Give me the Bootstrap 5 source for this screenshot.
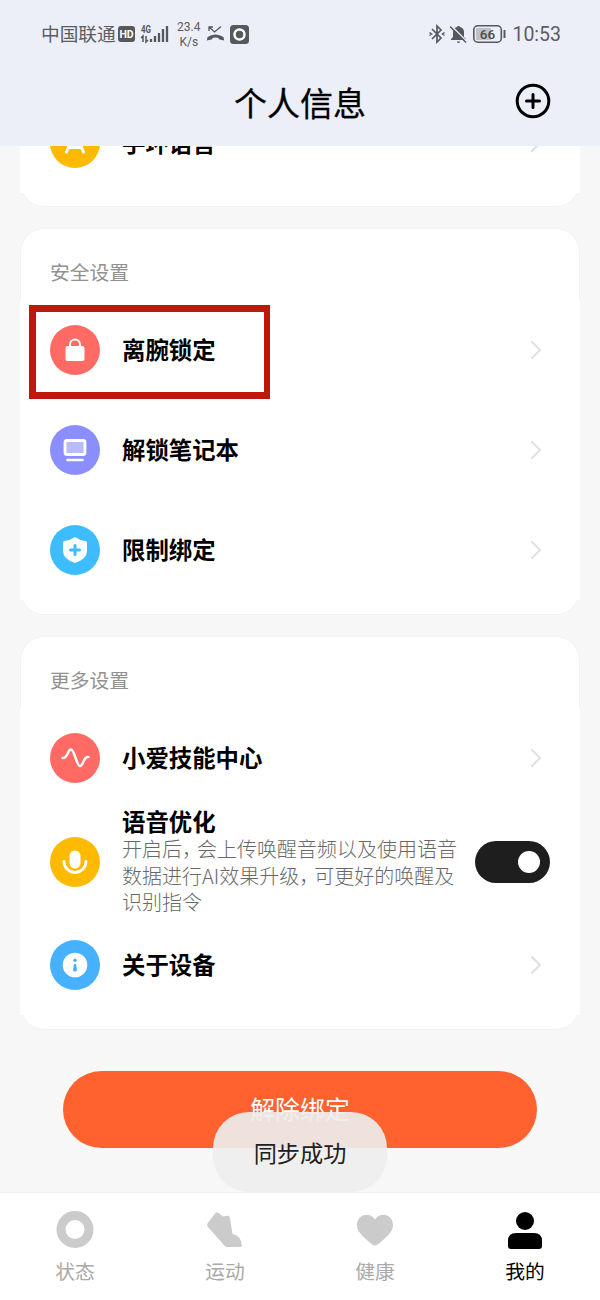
<!DOCTYPE html>
<html lang="zh-CN">
<head>
<meta charset="utf-8">
<meta name="viewport" content="width=device-width, initial-scale=1">
<title>个人信息</title>
<link href="https://cdn.jsdelivr.net/npm/bootstrap@5.3.0/dist/css/bootstrap.min.css" rel="stylesheet">
<style>
body{font-family:"Noto Sans CJK SC",sans-serif;background:#f7f7f7;color:#000;height:1300px;overflow:hidden}
svg{display:block;flex:none}
.top-area{height:146px;background:#eceff8}
.status{height:68px;padding:0 39px 0 41px;color:#5b5d62;font-family:Roboto,"Noto Sans CJK SC",sans-serif}
.carrier{font-size:18.7px;line-height:24px;font-weight:400;padding-top:2px}
.speed{font-size:12px;line-height:15px;width:28px;padding-top:1px}
.clock{font-size:19.5px;line-height:24px;padding-top:1px}
.title-bar{height:78px;padding-right:49px}
.title-bar h1{font-size:33px;line-height:48px;font-weight:400;padding:0 0 11px 49px;-webkit-text-stroke:.3px #000}
.content-area{height:1046px}
.panel{margin:0 20px 21px;border:1px solid #f2f2f2;border-radius:24px;background:#fff}
.panel-cut{height:61px;border-top:0;border-radius:0 0 24px 24px}
.clip-rows{height:47px;overflow:hidden;margin:0 -1px}
.clip-rows .setting{margin:-53px 0 0}
.panel-title{height:71px;padding:29px 29px 0;font-size:19.8px;line-height:28px;color:#919191}
.setting{height:100px;margin:0 -1px;padding:0 37px 0 30px;background:#fff}
.setting-voice{height:107px;padding-right:30px}
.disc{width:50px;height:50px;margin-right:22px}
.name{font-size:23.4px;line-height:28px;font-weight:700;padding-bottom:3px}
.setting-voice .name{padding-bottom:1px}
.desc{font-size:20px;line-height:26.7px;font-weight:300;color:#686868;white-space:nowrap}
.tight{margin-right:-5px}
.mark-box{left:9px;top:5px;width:241px;height:94px;border:7px solid #bc190c;border-width:7px 6px 7px 7px}
.toggle{width:75px;height:42px;border-radius:21px;background:#1e1e1e;padding-right:10px}
.knob{width:22px;height:22px;background:#fff}
.unbind{width:474px;height:77px;margin-top:41px;border-radius:39px;background:#ff622f;color:#fff;font-size:24.9px;line-height:36px;padding-bottom:4px}
.sync-toast{left:213px;bottom:0;width:174px;height:80px;border-radius:36px;background:rgba(237,237,237,.91);color:#202020;font-size:23.2px;line-height:34px}
.tabs{height:108px;border-top:1px solid #eee;background:#fff;color:#aaa;font-size:19.8px;line-height:28px}
.tabs a{color:inherit;width:150px;padding-top:17px}
.tabs a.active{color:#000}
.tabs span{margin-top:7px}
</style>
<script src="https://cdn.jsdelivr.net/npm/bootstrap@5.3.0/dist/js/bootstrap.bundle.min.js"></script>
</head>
<body class="d-flex flex-column">
<header class="top-area flex-shrink-0">
  <div class="status d-flex align-items-center">
    <span class="carrier">中国联通</span>
    <svg width="17" height="16" viewBox="0 0 17 16" style="margin-left:2px"><rect width="17" height="16" rx="3" fill="#56585c"/><text x="8.5" y="12" text-anchor="middle" font-family="Roboto" font-weight="700" font-size="10.5" fill="#fff">HD</text></svg>
    <svg width="30" height="20" viewBox="0 0 30 20" style="margin-left:5px"><text x="1" y="8.5" font-family="Roboto" font-weight="700" font-size="10" textLength="10" lengthAdjust="spacingAndGlyphs" fill="#56585c">4G</text><g stroke="#56585c" stroke-width="1.5" fill="none"><path d="M3 18v-6l-2 2M6 12v6l2-2"/><path d="M11 18v-3M15 18v-6M19 18v-9M23 18V5M27 18V2" stroke-width="2.3"/></g></svg>
    <span class="speed text-center" style="margin-left:5px">23.4<br>K/s</span>
    <svg width="19" height="18" viewBox="0 0 19 18" style="margin-left:3px"><path d="M2 13.500q7.500-5 15 0" fill="none" stroke="#56585c" stroke-width="2.800"/><path d="M.8 15.500q0-3 2.500-4l3 .5v2.300zM18.200 15.500q0-3-2.500-4l-3 .5v2.300z" fill="#56585c"/><path d="M3 6V2h4M3 2l5.500 5L15 1.500" fill="none" stroke="#56585c" stroke-width="1.300"/></svg>
    <svg width="19" height="19" viewBox="0 0 19 19" style="margin-left:5px"><rect width="19" height="19" rx="3.500" fill="#56585c"/><circle cx="9.500" cy="9.500" r="5" fill="none" stroke="#fff" stroke-width="2.500"/></svg>
    <svg class="ms-auto" width="16" height="20" viewBox="0 0 16 20"><path d="M3 5l9 9-4 4V2l4 4-9 9" fill="none" stroke="#56585c" stroke-width="1.700"/><path d="M.5 8.500l2 1.500-2 1.500M15.500 8.500l-2 1.500 2 1.500" fill="none" stroke="#56585c" stroke-width="1.500"/></svg>
    <svg width="17" height="19" viewBox="0 0 17 19" style="margin-left:5px"><path d="M1 15v-1l2-2V7q0-4 4-5 0-1 1.500-1T10 2q4 1 4 5v5l2 2v1zM7 16.500h3q0 1.500-1.500 1.500T7 16.500z" fill="#56585c"/><path d="M1 .5l16 16" stroke="#eceff8" stroke-width="1.500"/><path d="M0 1.500l16 16" stroke="#56585c" stroke-width="1.500"/></svg>
    <svg width="33" height="18" viewBox="0 0 33 18" style="margin-left:6px"><rect x=".8" y=".8" width="27.500" height="16.400" rx="4" fill="none" stroke="#56585c" stroke-width="1.600"/><path d="M3 3h15v12H3z" fill="#bfc1c7"/><path d="M31.500 5v8" stroke="#56585c" stroke-width="2"/><text x="14.500" y="13.800" text-anchor="middle" font-family="Roboto" font-weight="500" font-size="13.500" fill="#494b50">66</text></svg>
    <span class="clock" style="margin-left:6px">10:53</span>
  </div>
  <div class="title-bar d-flex align-items-center">
    <h1 class="mb-0 w-100 text-center" style="margin-right:-36px">个人信息</h1>
    <svg width="36" height="36" viewBox="0 0 36 36" style="margin-top:-12px"><circle cx="18" cy="18" r="15.800" fill="none" stroke="#000" stroke-width="3"/><path d="M11.500 18h13M18 11.500v13" stroke="#000" stroke-width="3" stroke-linecap="round"/></svg>
  </div>
</header>

<main class="content-area position-relative flex-shrink-0">
  <section class="panel panel-cut">
    <div class="clip-rows">
      <div class="setting d-flex align-items-center">
        <svg class="disc" viewBox="0 0 50 50"><circle cx="25" cy="25" r="25" fill="#fdba00"/><path d="M16.500 34l7.500-18h2l7.500 18M20 29.500h10" fill="none" stroke="#fff" stroke-width="3" stroke-linecap="round"/></svg>
        <span class="name">手环语言</span>
        <svg class="ms-auto" width="14" height="20" viewBox="0 0 14 20"><path d="M3 2l8 8-8 8" fill="none" stroke="#e2e2e2" stroke-width="2.300" stroke-linecap="round" stroke-linejoin="round"/></svg>
      </div>
    </div>
  </section>

  <section class="panel" style="height:387px">
    <div class="panel-title">安全设置</div>
    <div class="setting position-relative d-flex align-items-center">
      <svg class="disc" viewBox="0 0 50 50"><circle cx="25" cy="25" r="25" fill="#ff6b64"/><rect x="15.500" y="21" width="19" height="15" rx="2" fill="#fff"/><path d="M20 21v-1.500a5 5 0 0 1 10 0V21" fill="none" stroke="#fff" stroke-width="2"/></svg>
      <span class="name">离腕锁定</span>
      <svg class="ms-auto" width="14" height="20" viewBox="0 0 14 20"><path d="M3 2l8 8-8 8" fill="none" stroke="#e2e2e2" stroke-width="2.300" stroke-linecap="round" stroke-linejoin="round"/></svg>
      <div class="mark-box position-absolute"></div>
    </div>
    <div class="setting d-flex align-items-center">
      <svg class="disc" viewBox="0 0 50 50"><circle cx="25" cy="25" r="25" fill="#8b8eff"/><rect x="15" y="15.500" width="20" height="14" rx="2" fill="#b9bbff" stroke="#fff" stroke-width="2.800"/><path d="M17.500 35h15" stroke="#fff" stroke-width="2.600" stroke-linecap="round"/></svg>
      <span class="name">解锁笔记本</span>
      <svg class="ms-auto" width="14" height="20" viewBox="0 0 14 20"><path d="M3 2l8 8-8 8" fill="none" stroke="#e2e2e2" stroke-width="2.300" stroke-linecap="round" stroke-linejoin="round"/></svg>
    </div>
    <div class="setting d-flex align-items-center">
      <svg class="disc" viewBox="0 0 50 50"><circle cx="25" cy="25" r="25" fill="#3dbcff"/><path d="M25 12q5 3.500 10.500 4 1.500.2 1.500 2v8q0 8-12 12-12-4-12-12v-8q0-1.800 1.500-2Q20 15.500 25 12z" fill="#fff"/><path d="M20.500 25h9M25 20.500v9" stroke="#3dbcff" stroke-width="3" stroke-linecap="round"/></svg>
      <span class="name">限制绑定</span>
      <svg class="ms-auto" width="14" height="20" viewBox="0 0 14 20"><path d="M3 2l8 8-8 8" fill="none" stroke="#e2e2e2" stroke-width="2.300" stroke-linecap="round" stroke-linejoin="round"/></svg>
    </div>
  </section>

  <section class="panel mb-0" style="height:394px">
    <div class="panel-title">更多设置</div>
    <div class="setting d-flex align-items-center">
      <svg class="disc" viewBox="0 0 50 50"><circle cx="25" cy="25" r="25" fill="#ff6b64"/><path d="M13 25c5 0 4.500-8.500 8-8.500S26.500 33 30 33s3-9 8-9" fill="none" stroke="#fff" stroke-width="2.500" stroke-linecap="round"/><path d="M11 25h3M36 24h4" stroke="#fff" stroke-width="2" opacity=".45"/></svg>
      <span class="name">小爱技能中心</span>
      <svg class="ms-auto" width="14" height="20" viewBox="0 0 14 20"><path d="M3 2l8 8-8 8" fill="none" stroke="#e2e2e2" stroke-width="2.300" stroke-linecap="round" stroke-linejoin="round"/></svg>
    </div>
    <div class="setting setting-voice d-flex align-items-center">
      <svg class="disc" viewBox="0 0 50 50"><circle cx="25" cy="25" r="25" fill="#fdba00"/><rect x="19.500" y="13.500" width="11" height="18" rx="5.500" fill="#fff"/><path d="M14 24.500a11 11 0 0 0 22 0" fill="none" stroke="#fff" stroke-width="2.800" stroke-linecap="round"/></svg>
      <div>
        <div class="name">语音优化</div>
        <div class="desc">开启后<span class="tight">，</span>会上传唤醒音频以及使用语音<br>数据进行AI效果升级<span class="tight">，</span>可更好的唤醒及<br>识别指令</div>
      </div>
      <div class="toggle ms-auto d-flex align-items-center justify-content-end flex-shrink-0"><div class="knob rounded-circle"></div></div>
    </div>
    <div class="setting d-flex align-items-center">
      <svg class="disc" viewBox="0 0 50 50"><circle cx="25" cy="25" r="25" fill="#45b1ff"/><circle cx="25" cy="25" r="12.300" fill="#fff"/><circle cx="25" cy="20.300" r="1.700" fill="#45b1ff"/><path d="M24 24h2l1 6q0 1.500-2 1.500T23 30z" fill="#45b1ff"/></svg>
      <span class="name">关于设备</span>
      <svg class="ms-auto" width="14" height="20" viewBox="0 0 14 20"><path d="M3 2l8 8-8 8" fill="none" stroke="#e2e2e2" stroke-width="2.300" stroke-linecap="round" stroke-linejoin="round"/></svg>
    </div>
  </section>
  <div class="unbind mx-auto d-flex align-items-center justify-content-center">解除绑定</div>
  <div class="sync-toast position-absolute d-flex align-items-center justify-content-center">同步成功</div>
</main>

<nav class="tabs d-flex flex-shrink-0">
  <a class="d-flex flex-column align-items-center text-decoration-none"><svg width="38" height="40" viewBox="0 0 38 40"><circle cx="19" cy="19.500" r="14" fill="none" stroke="#cbcbcb" stroke-width="9"/></svg><span>状态</span></a>
  <a class="d-flex flex-column align-items-center text-decoration-none"><svg width="38" height="40" viewBox="0 0 38 40"><path d="M1.500 13.500L9 3.500q1.500-2 3.500-.5L17 6.500l4-.8q2.700-.4 3 2.300L26.500 24q9 2 9.300 11.500 0 1.500-1.500 1.500H21q-1.300 0-2.300-1L2 17q-1.700-1.800-.5-3.500z" fill="#cbcbcb"/></svg><span>运动</span></a>
  <a class="d-flex flex-column align-items-center text-decoration-none"><svg width="38" height="40" viewBox="0 0 38 40"><path d="M19 35.500q-2 0-7-4.500C5 25 1 20.500 1 15 1 5 13 1 19 9.500 25 1 37 5 37 15c0 5.500-4 10-11 16q-5 4.500-7 4.500z" fill="#cbcbcb"/></svg><span>健康</span></a>
  <a class="active d-flex flex-column align-items-center text-decoration-none"><svg width="38" height="40" viewBox="0 0 38 40"><circle cx="19" cy="11" r="9"/><path d="M2 31q0-8 8-8h18q8 0 8 8v5q0 3-3 3H5q-3 0-3-3z"/></svg><span>我的</span></a>
</nav>
</body>
</html>
